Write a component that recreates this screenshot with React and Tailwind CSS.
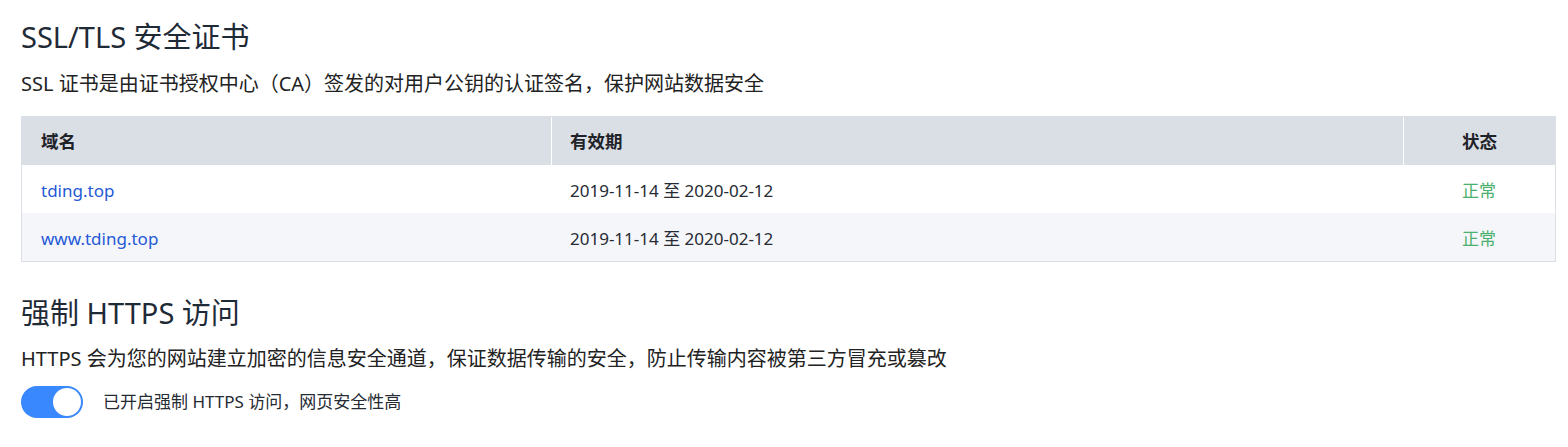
export default function App() {
  const font = { fontFamily: '"Noto Sans", "Noto Sans CJK SC", sans-serif' };
  const rows = [
    { d: "tding.top", bg: "bg-white" },
    { d: "www.tding.top", bg: "bg-[#f5f6fa]" },
  ];
  return (
    <div className="bg-white w-[1568px] h-[447px] pt-[16px] pl-[21px] text-[#1f2937]" style={font}>
      <h1 className="text-[29px] leading-[42px] text-[#1f2a37]">SSL/TLS 安全证书</h1>
      <p className="mt-[11px] text-[20px] leading-[30px] text-[#222]">
        SSL 证书是由证书授权中心（CA）签发的对用户公钥的认证签名，保护网站数据安全
      </p>
      <div className="mt-[17px] w-[1535px] border-x border-b border-[#dcdfe6]">
        <div className="grid grid-cols-[529px_852px_1fr] bg-[#dadee5] h-[49px] items-stretch pt-[1px] text-[17.5px] font-bold text-[#1f2329]">
          <div className="flex items-center pl-[19px]">域名</div>
          <div className="flex items-center pl-[18px] border-l border-white">有效期</div>
          <div className="flex items-center justify-center border-l border-white">状态</div>
        </div>
        {rows.map((r) => (
          <div key={r.d} className={`grid grid-cols-[529px_852px_1fr] h-[48px] items-center pt-[3px] text-[17px] ${r.bg}`}>
            <div className="pl-[19px] text-[#2459d6]">{r.d}</div>
            <div className="pl-[19px] text-[#262b33]">2019-11-14 至 2020-02-12</div>
            <div className="text-center text-[#4caf6e]">正常</div>
          </div>
        ))}
      </div>
      <h2 className="mt-[30px] text-[29px] leading-[42px] text-[#1f2a37]">强制 HTTPS 访问</h2>
      <p className="mt-[10px] text-[20px] leading-[30px] text-[#222]">
        HTTPS 会为您的网站建立加密的信息安全通道，保证数据传输的安全，防止传输内容被第三方冒充或篡改
      </p>
      <div className="mt-[12px] flex items-center gap-[20px]">
        <div className="w-[62px] h-[32px] rounded-full bg-[#3a88fd] flex items-center justify-end pr-[2px]">
          <div className="w-[28px] h-[28px] rounded-full bg-white"></div>
        </div>
        <span className="text-[17px] text-[#262b33]">已开启强制 HTTPS 访问，网页安全性高</span>
      </div>
    </div>
  );
}
